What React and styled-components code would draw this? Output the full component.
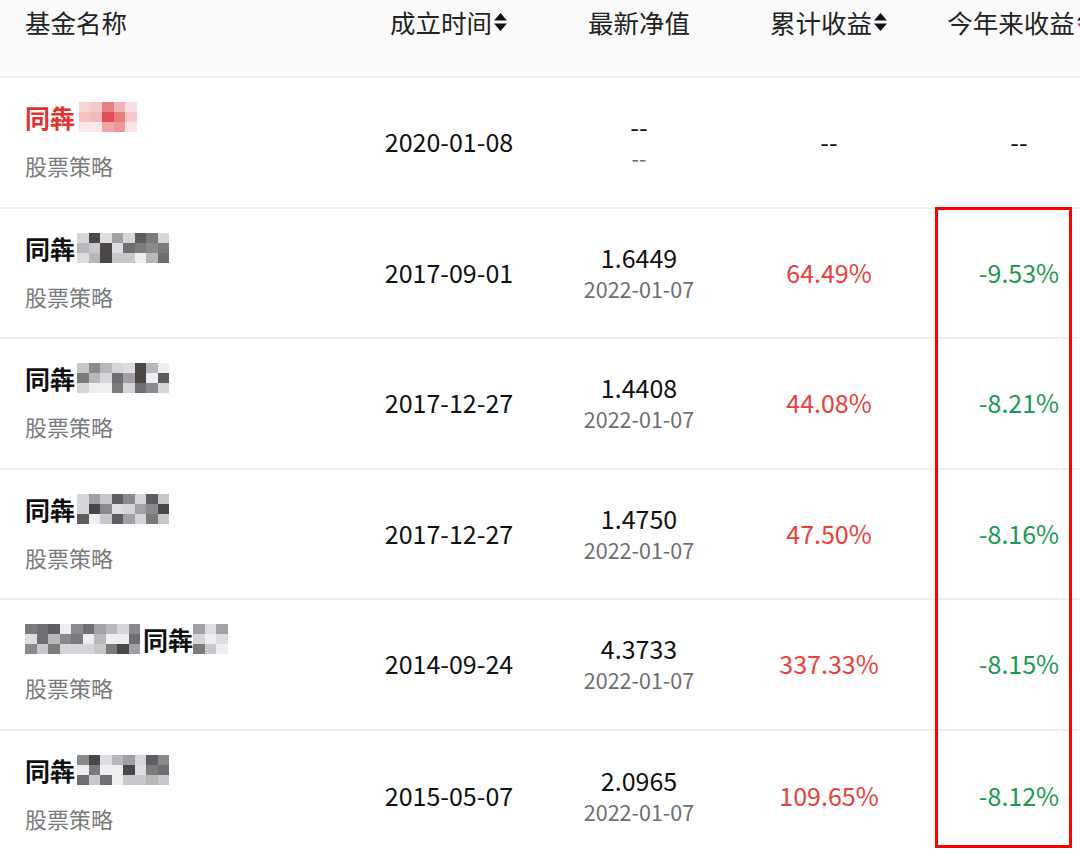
import React from "react";
import styled, { createGlobalStyle } from "styled-components";

const Global = createGlobalStyle`
  html, body { margin: 0; padding: 0; background: #fff; }
  body { font-family: "Noto Sans CJK SC", "Noto Sans", sans-serif; color: #222; }
  * { box-sizing: border-box; }
`;

const Page = styled.div`
  position: relative;
  width: 1080px;
  height: 855px;
  overflow: hidden;
  background: #fff;
`;

const Table = styled.div`
  width: 1114px;
`;

const Grid = styled.div`
  display: grid;
  grid-template-columns: 354px 190px 190px 190px 190px;
`;

const HeaderRow = styled(Grid)`
  height: 78px;
  background: #fafafa;
  border-bottom: 2px solid #eeeeee;
`;

const HeadCell = styled.div`
  display: flex;
  align-items: flex-start;
  justify-content: ${(p) => (p.$left ? "flex-start" : "center")};
  padding-left: ${(p) => (p.$left ? "25px" : "0")};
  padding-top: 4px;
  font-size: 25.5px;
  line-height: 36px;
  color: #222;
  gap: 1px;
`;

const SortWrap = styled.span`
  display: inline-flex;
  align-items: center;
  height: 36px;
`;

const SortIcon = ({ active }) => (
  <SortWrap>
    <svg width="15" height="22" viewBox="0 0 15 22">
      <path d="M1 9.5 L7.5 2 L14 9.5 Z" fill="#111" />
      <path d="M1 12.5 L7.5 20 L14 12.5 Z" fill={active ? "#e4393c" : "#111"} />
    </svg>
  </SortWrap>
);

const Row = styled(Grid)`
  height: 130.5px;
  border-bottom: 2px solid #eeeeee;
  &:last-child { border-bottom: none; }
`;

const NameCell = styled.div`
  display: flex;
  flex-direction: column;
  padding: 21px 0 0 25px;
  gap: 13px;
`;

const NameLine = styled.div`
  display: flex;
  align-items: center;
  height: 36px;
  font-size: 25px;
  font-weight: 700;
  color: ${(p) => (p.$red ? "#e2312f" : "#111")};
  white-space: nowrap;
`;

const SubText = styled.div`
  font-size: 22px;
  line-height: 34px;
  color: #7a7a7a;
`;

const Cell = styled.div`
  display: flex;
  flex-direction: column;
  align-items: center;
  justify-content: center;
  padding-bottom: 2px;
`;

const MainText = styled.div`
  font-size: 25px;
  line-height: 34px;
  color: ${(p) => p.$color || "#111"};
`;

const DateSub = styled.div`
  font-size: 21.5px;
  line-height: 30px;
  color: #6e6e6e;
`;

const MosaicGrid = styled.span`
  display: inline-grid;
  grid-auto-flow: column;
  grid-template-rows: repeat(3, 10px);
  grid-auto-columns: 11.5px;
  margin-left: ${(p) => p.$ml || 0}px;
  margin-right: ${(p) => p.$mr || 0}px;
  filter: blur(0.7px);
`;

const MosaicCell = styled.span`
  display: block;
`;

function Mosaic({ colors, ml, mr }) {
  return (
    <MosaicGrid $ml={ml} $mr={mr}>
      {colors.map((c, i) => (
        <MosaicCell key={i} style={{ background: c }} />
      ))}
    </MosaicGrid>
  );
}

const RedBox = styled.div`
  position: absolute;
  left: 935px;
  top: 207px;
  width: 137px;
  height: 641px;
  border: 3px solid #ff0000;
  pointer-events: none;
`;

const pink = [
  "#f6d3d5", "#f4c2c4", "#fbe7e8",
  "#f5c8ca", "#f3babd", "#fde9ea",
  "#e87f86", "#e24e57", "#f0a7ab",
  "#f1b3b5", "#ea7f75", "#ef9a99",
  "#f9dde0", "#f6c8cb", "#fbe3e5",
];

function grays(seed, n) {
  const out = [];
  let s = seed;
  const palette = ["#5e5e62", "#8a8a8e", "#b8b8bc", "#d6d6da", "#4a4746", "#a2a0a4", "#6f6e72", "#c8c8cc", "#eeeef0", "#7d7a7a", "#dcdce2"];
  for (let i = 0; i < n; i++) {
    s = (s * 9301 + 49297) % 233280;
    out.push(palette[Math.floor((s / 233280) * palette.length)]);
  }
  return out;
}

const rows = [
  {
    red: true,
    name: (
      <>
        同犇
        <Mosaic colors={pink} ml={4} />
      </>
    ),
    date: "2020-01-08",
    nav: "--",
    navDate: "--",
    total: "--",
    ytd: "--",
    dashes: true,
  },
  {
    name: (
      <>
        同犇
        <Mosaic colors={grays(3, 24)} ml={2} />
      </>
    ),
    date: "2017-09-01",
    nav: "1.6449",
    navDate: "2022-01-07",
    total: "64.49%",
    ytd: "-9.53%",
  },
  {
    name: (
      <>
        同犇
        <Mosaic colors={grays(11, 24)} ml={2} />
      </>
    ),
    date: "2017-12-27",
    nav: "1.4408",
    navDate: "2022-01-07",
    total: "44.08%",
    ytd: "-8.21%",
  },
  {
    name: (
      <>
        同犇
        <Mosaic colors={grays(27, 24)} ml={2} />
      </>
    ),
    date: "2017-12-27",
    nav: "1.4750",
    navDate: "2022-01-07",
    total: "47.50%",
    ytd: "-8.16%",
  },
  {
    name: (
      <>
        <Mosaic colors={grays(41, 30)} mr={3} />
        同犇
        <Mosaic colors={grays(57, 9)} />
      </>
    ),
    date: "2014-09-24",
    nav: "4.3733",
    navDate: "2022-01-07",
    total: "337.33%",
    ytd: "-8.15%",
  },
  {
    name: (
      <>
        同犇
        <Mosaic colors={grays(73, 24)} ml={2} />
      </>
    ),
    date: "2015-05-07",
    nav: "2.0965",
    navDate: "2022-01-07",
    total: "109.65%",
    ytd: "-8.12%",
  },
];

const RED = "#e8403c";
const GREEN = "#1c9a52";

export default function App() {
  return (
    <>
      <Global />
      <Page>
        <Table>
          <HeaderRow>
            <HeadCell $left>基金名称</HeadCell>
            <HeadCell>
              成立时间
              <SortIcon />
            </HeadCell>
            <HeadCell>最新净值</HeadCell>
            <HeadCell>
              累计收益
              <SortIcon />
            </HeadCell>
            <HeadCell>
              今年来收益
              <SortIcon active />
            </HeadCell>
          </HeaderRow>
          {rows.map((r, i) => (
            <Row key={i}>
              <NameCell>
                <NameLine $red={r.red}>{r.name}</NameLine>
                <SubText>股票策略</SubText>
              </NameCell>
              <Cell>
                <MainText>{r.date}</MainText>
              </Cell>
              <Cell>
                <MainText>{r.nav}</MainText>
                <DateSub>{r.navDate}</DateSub>
              </Cell>
              <Cell>
                <MainText $color={r.dashes ? "#111" : RED}>{r.total}</MainText>
              </Cell>
              <Cell>
                <MainText $color={r.dashes ? "#111" : GREEN}>{r.ytd}</MainText>
              </Cell>
            </Row>
          ))}
        </Table>
        <RedBox />
      </Page>
    </>
  );
}
